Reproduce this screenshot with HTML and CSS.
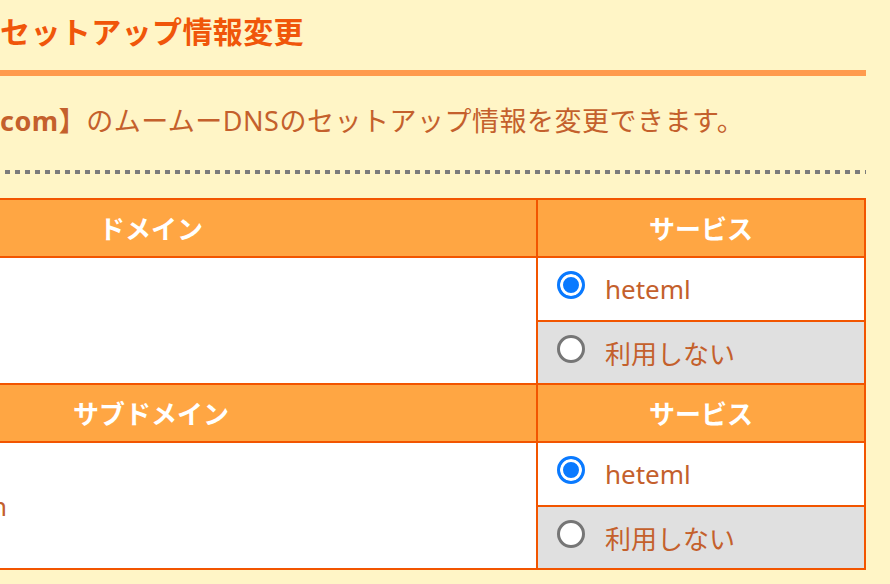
FILE: index.html
```html
<!DOCTYPE html>
<html lang="ja">
<head>
<meta charset="utf-8">
<title>ムームーDNS セットアップ情報変更</title>
<link rel="stylesheet" href="styles.css">
</head>
<body>
<div class="page">
  <h1 class="title"><span class="lead">ムームーDNS</span>セットアップ情報変更</h1>
  <p class="desc"><span class="lead"><b>【example.</b></span><b>com】</b>のムームーDNSのセットアップ情報を変更できます。</p>
  <table class="setup">
    <colgroup><col class="c-domain"><col class="c-service"></colgroup>
    <tr class="head"><th>ドメイン</th><th>サービス</th></tr>
    <tr>
      <td rowspan="2" class="domain"><span class="dname">example.com</span></td>
      <td class="opt"><label class="choice"><input type="radio" name="s1" checked><span>heteml</span></label></td>
    </tr>
    <tr>
      <td class="opt off"><label class="choice"><input type="radio" name="s1"><span>利用しない</span></label></td>
    </tr>
    <tr class="head"><th>サブドメイン</th><th>サービス</th></tr>
    <tr>
      <td rowspan="2" class="domain"><span class="dname edge">www.example.com</span></td>
      <td class="opt"><label class="choice"><input type="radio" name="s2" checked><span>heteml</span></label></td>
    </tr>
    <tr>
      <td class="opt off"><label class="choice"><input type="radio" name="s2"><span>利用しない</span></label></td>
    </tr>
  </table>
</div>
</body>
</html>
```
FILE: styles.css
```css
html, body {
  margin: 0;
  padding: 0;
}
body {
  background: #fff5c6;
  font-family: "Noto Sans", "Noto Sans CJK JP", sans-serif;
  color: #c4602c;
  overflow: hidden;
}
.page {
  margin-left: -236px;
  width: 1102px;
}
.lead {
  display: inline-block;
  width: 236px;
  text-align: right;
  white-space: nowrap;
  letter-spacing: 0;
}
.title {
  margin: 0;
  padding: 12px 0 18px;
  font-size: 30px;
  line-height: 40px;
  font-weight: bold;
  letter-spacing: 0.4px;
  color: #f0560a;
  border-bottom: 6px solid #ff9b4e;
  white-space: nowrap;
}
.desc {
  margin: 25px 0 0;
  padding-bottom: 33px;
  font-size: 27px;
  line-height: 40px;
  letter-spacing: 0.5px;
  white-space: nowrap;
  background: repeating-linear-gradient(to right, transparent 0 1px, #7c7c7c 1px 6px, transparent 6px 10px) left bottom / 100% 4px no-repeat;
}
.desc b {
  font-weight: bold;
}
.setup {
  margin-top: 24px;
  width: 1102px;
  table-layout: fixed;
  border-collapse: collapse;
}
.c-service {
  width: 328px;
}
.setup th,
.setup td {
  border: 2px solid #f25500;
  padding: 0;
}
.setup th {
  height: 56px;
  background: #ffa643;
  color: #fff;
  font-size: 26px;
  font-weight: bold;
  text-align: center;
}
.domain {
  background: #fff;
  font-size: 26px;
  vertical-align: middle;
}
.dname {
  padding-left: 20px;
}
.dname.edge {
  display: inline-block;
  width: 241px;
  padding-left: 0;
  text-align: right;
  white-space: nowrap;
}
.opt {
  background: #fff;
  height: 62px;
  padding-left: 19px !important;
  font-size: 26px;
}
.opt.off {
  background: #e0e0e0;
  height: 61px;
}
.choice {
  display: flex;
  align-items: center;
  gap: 20px;
}
.choice input {
  appearance: none;
  -webkit-appearance: none;
  flex: none;
  width: 28px;
  height: 28px;
  margin: -8px 0 0;
  border-radius: 50%;
  border: 3px solid #767676;
  background: #fff;
  box-sizing: border-box;
}
.choice input:checked {
  border-color: #0a7aff;
  background: #0a7aff;
  box-shadow: inset 0 0 0 3px #fff;
}
.choice span {
  padding-top: 0;
}
```
